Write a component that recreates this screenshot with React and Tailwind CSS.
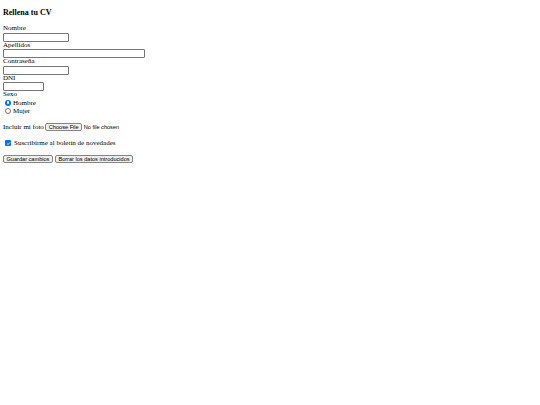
import React from 'react'

const serif = { fontFamily: '"Liberation Serif", "Times New Roman", serif' }

const Field = ({ label, w, type = 'text' }) => (
  <div className="flex flex-col">
    <label className="text-[7px] leading-[7.5px] h-[7.5px]">{label}</label>
    <input type={type} className={`${w} h-[9px] border border-[#767676] rounded-[1px] bg-white`} />
  </div>
)

const Btn = ({ children }) => (
  <button className="h-[8.5px] px-[2.5px] border border-[#858585] rounded-[2px] bg-[#efefef] text-[5.6px] leading-[6px] font-['Liberation_Sans',Arial,sans-serif] text-black">
    {children}
  </button>
)

const App = () => {
  return (
    <div className="w-[540px] h-[405px] bg-white text-black px-[3px] pt-[8px]" style={serif}>
      <h3 className="text-[8px] leading-[9px] font-bold">Rellena tu CV</h3>

      <form className="flex flex-col mt-[8px]">
        <Field label="Nombre" w="w-[66px]" />
        <Field label="Apellidos" w="w-[142px]" />
        <Field label="Contraseña" w="w-[66px]" type="password" />
        <Field label="DNI" w="w-[41px]" />

        <div className="text-[7px] leading-[7.5px]">Sexo</div>
        <div className="flex items-center gap-[2px] pl-[2px] text-[7px] leading-[8px]">
          <span className="w-[6px] h-[6px] rounded-full bg-[#0075ff] flex items-center justify-center">
            <span className="w-[2.5px] h-[2.5px] rounded-full bg-white"></span>
          </span>
          Hombre
        </div>
        <div className="flex items-center gap-[2px] pl-[2px] text-[7px] leading-[8px]">
          <span className="w-[6px] h-[6px] rounded-full border border-[#767676] bg-white"></span>
          Mujer
        </div>

        <div className="flex items-center gap-[1.5px] mt-[8px] text-[7px] leading-[8px]">
          <span>Incluir mi foto</span>
          <Btn>Choose File</Btn>
          <span className="text-[5.6px] font-['Liberation_Sans',Arial,sans-serif]">No file chosen</span>
        </div>

        <div className="flex items-center gap-[3px] mt-[8px] pl-[2px] text-[7px] leading-[8px]">
          <span className="w-[6px] h-[6px] rounded-[1px] bg-[#0075ff] flex items-center justify-center">
            <svg viewBox="0 0 10 10" className="w-[5px] h-[5px]">
              <path d="M2 5.2 L4.2 7.3 L8 2.8" fill="none" stroke="white" strokeWidth="1.8" />
            </svg>
          </span>
          Suscribirme al boletín de novedades
        </div>

        <div className="flex gap-[2px] mt-[7.5px]">
          <Btn>Guardar cambios</Btn>
          <Btn>Borrar los datos introducidos</Btn>
        </div>
      </form>
    </div>
  )
}

export default App
